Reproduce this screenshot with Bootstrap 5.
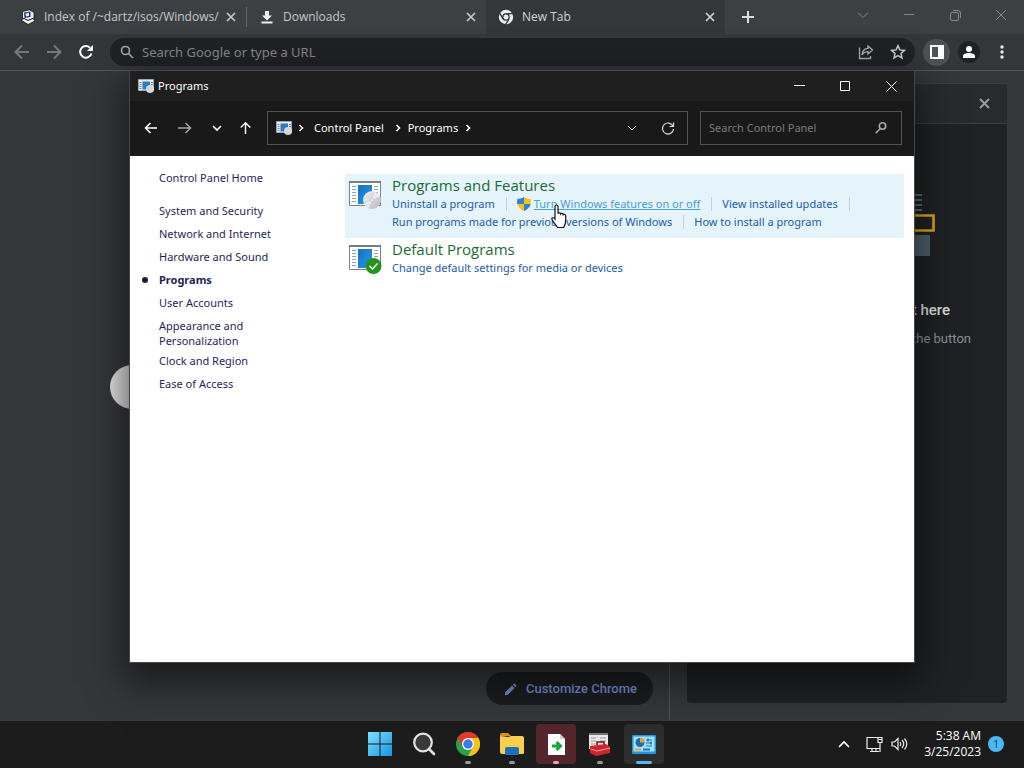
<!DOCTYPE html>
<html lang="en">
<head>
<meta charset="utf-8">
<meta name="viewport" content="width=device-width, initial-scale=1">
<title>Programs</title>
<link href="https://cdn.jsdelivr.net/npm/bootstrap@5.3.0/dist/css/bootstrap.min.css" rel="stylesheet">
<style>
body{font-family:"Open Sans","Noto Sans",sans-serif;font-size:12px;line-height:18px;background:#35363a;color:#fff}
svg{display:block;flex:none}
button{background:none;border:0;padding:0;color:inherit}
a{text-decoration:none}
.tabstrip{height:34px;background:#3c4043;padding-left:8px}
.btab{flex:0 0 239px;padding:0 10px 0 12px;color:#c4c7cb}
.btab.on{background:#35363a;color:#d2d4d7}
.divide{width:1px;height:20px;background:#62666a;margin-right:-10px;margin-left:10px}
.toolbar{height:37px;border-bottom:1px solid #56575a;padding:0 20px 0 13px}
.omni{height:28px;border-radius:14px;background:#202124;padding:0 9px 0 10px;margin-left:13px}
.omni input{background:none;border:0;outline:0;color:#fff;font-family:"Noto Sans",sans-serif;font-size:13px;width:100%;padding:0}
.omni input::placeholder{color:#85878a;opacity:1}
.round26{width:27px;height:27px;border-radius:50%;background:#505155}
.round22{width:22px;height:22px;border-radius:50%;background:#202124}
.ntp{border-right:1px solid #505155;padding-bottom:15px}
.customize{height:33px;border-radius:17px;background:#1b1c1f;color:#7489c8;font:500 13px/20px Roboto,sans-serif;padding:0 16px 0 18px;margin-right:16px}
.sidepane{width:320px;margin:12px 17px 17px;background:#202124;border-radius:0 0 4px 4px;font-family:Roboto,sans-serif}
.sidepane header{height:41px;background:#292a2d;border:1px solid #3c3d40;border-left:0;border-right:0;padding-right:17px}
.scene{margin:68px 72px 0 auto}
.pane-title{font-size:15px;font-weight:500;line-height:20px;color:#dcdee1;padding-right:57px;margin-top:42px}
.pane-sub{font-size:13px;line-height:20px;color:#8d9196;padding-right:36px;margin-top:9px}
.knob{position:absolute;left:110px;top:365px;width:44px;height:44px;border-radius:50%;background:linear-gradient(90deg,#e6e6e6,#bbb)}
.win{position:absolute;left:129px;right:109px;top:70px;bottom:105px;border:1px solid #46474a;background:#fff;box-shadow:0 14px 34px 6px rgba(0,0,0,.5);font-family:"Noto Sans",sans-serif;font-size:11px}
.titlebar{height:30px;background:#1f1f1f;padding-left:8px}
.winbtn{width:46px;height:30px}
.addressrow{height:55px;background:#191919;padding:0 12px 1px 14px}
.addr{height:34px;border:1px solid #535353;padding:0 12px 0 8px}
.find{width:202px;height:34px;border:1px solid #535353;margin-left:12px;padding:0 14px 0 8px}
.find input{background:none;border:0;outline:0;padding:0;width:100%;color:#fff}
.find input::placeholder{color:#7b7b7b;opacity:1}
.sidenav{width:215px;padding:14px 0 0 29px}
.sidenav a{display:block;color:#1f1f5c;line-height:15px;margin-bottom:8px}
.sidenav a.two{margin-bottom:5px}
.sidenav a.home{margin-bottom:18px}
.sidenav a.now{font-weight:700;position:relative}
.sidenav a.now::before{content:"";position:absolute;left:-17px;top:5px;width:6px;height:6px;border-radius:50%;background:#1b1b3c}
.cats{padding-top:18px}
.cat{padding-left:3px;margin-right:10px;height:64px}
.cat.hot{background:#e5f3fb}
.cat>svg{margin-top:6px}
.cat-body{margin-left:10px}
.cat h2{font-family:"Open Sans",sans-serif;font-size:15px;line-height:20px;font-weight:400;margin:1px 0 0;color:#1b6a35}
.cat a{color:#1b5cad}
.cat .task{display:flex;align-items:center}
.task.sep{padding-right:12px;margin-right:10px;background:linear-gradient(#c3d2e0,#c3d2e0) right/1px 14px no-repeat}
.cat a.hover{color:#4c9ed9;text-decoration:underline}
.shield{margin-right:3px}
.pointer{position:absolute;left:551px;top:204px}
.taskbar{height:48px;background:#1c1c1c;border-top:1px solid #3a3a3b;padding:0 20px 1px}
.tb{width:40px;height:40px;border-radius:4px;margin:0 2px;position:relative;display:flex;align-items:center;justify-content:center}
.tb.run::after{content:"";position:absolute;bottom:0;left:17px;width:6px;height:3px;border-radius:2px;background:#9a9a9a}
.tb.alert-red{background:#54262b}
.tb.run.alert-red::after{background:#f0a0a8}
.tb.cur{background:#2d2d2d}
.tb.run.cur::after{left:12px;width:16px;background:#55b8ea}
.tray{flex:1 1 0}
.clock{font-size:12px;line-height:16px;text-align:right}
.note{width:16px;height:16px;border-radius:50%;background:#4cb8f5;color:#163a52;font-size:10px;line-height:16px;text-align:center;margin-left:7px}
</style>
</head>
<body>
<svg width="0" height="0" class="position-absolute">
<defs>
<linearGradient id="blue" x1="0" y1="0" x2="1" y2="1"><stop offset="0" stop-color="#1173c7"/><stop offset="1" stop-color="#2b96e6"/></linearGradient>
<linearGradient id="win11" x1="0" y1="0" x2="1" y2="1"><stop offset="0" stop-color="#7fe0fb"/><stop offset="1" stop-color="#1496e0"/></linearGradient>
<linearGradient id="disc" x1="0" y1="0" x2="1" y2="1"><stop offset="0" stop-color="#f2f3f4"/><stop offset="1" stop-color="#b4b9be"/></linearGradient>
<symbol id="i-x" viewBox="0 0 10 10"><path d="M1 1l8 8M9 1l-8 8" stroke="currentColor" stroke-width="1.7"/></symbol>
<symbol id="i-prog" viewBox="0 0 16 14"><path fill="#e8ebee" stroke="#9aa7b4" d="M.5.5h15v11H.5z"/><path fill="#2a7bc8" d="M4.5 2.500h7.500v8H4.500z"/><path stroke="#6b89a8" d="M1.500 3.500h2M1.500 5.500h2M1.500 7.500h2M1.500 9.500h2M13 3.500h2M13 5.500h2"/><circle cx="12" cy="10" r="4" fill="#d4d6d9"/><path d="M12 10l3-2.600a4 4 0 0 1 .7 3.600z" fill="#f0d9c8"/></symbol>
<symbol id="i-frame" viewBox="0 0 32 26"><path d="M.5.5h31v24H.5z" fill="#fff" stroke="#7b8288"/><path d="M0 0h32v2H0z" fill="#767d83"/><path d="M9 4h14v19H9z" fill="url(#blue)"/><path d="M3 5.500h4M3 8.500h4M3 11.500h4M3 14.500h4M3 17.500h4M3 20.500h4M25 5.500h4M25 8.500h4M25 11.500h4" stroke="#98a2ad"/></symbol>
<symbol id="i-chev" viewBox="0 0 10 10"><path d="M3.500 2L6.500 5 3.500 8" fill="none" stroke="currentColor" stroke-width="1.600"/></symbol>
</defs></svg>

<div class="d-flex flex-column vh-100 overflow-hidden">
 <div class="tabstrip d-flex align-items-stretch">
  <div class="btab d-flex align-items-center">
   <svg width="16" height="16" viewBox="0 0 16 16"><path d="M2.500 2.500L9.500.8l4.500 2.700v5.500L8 11.500 2.500 9z" fill="#eef0f5" stroke="#111" stroke-width=".8"/><path d="M4 3.500L10.500 2.500V8L4.500 9z" fill="#1c2f7a"/><path d="M5.500 4.500l3.500-.7v3.200l-3 .6z" fill="#e8ecff"/><path d="M1 11l3-1.500 4 2 5-2 2 2.500-7 3.500z" fill="#eee" stroke="#111" stroke-width=".8"/></svg>
   <span class="ms-2 flex-grow-1 text-nowrap">Index of /~dartz/isos/Windows/</span>
   <button aria-label="Close tab"><svg width="10" height="10"><use href="#i-x"/></svg></button><span class="divide"></span>
  </div>
  <div class="btab d-flex align-items-center">
   <svg width="16" height="16" viewBox="0 0 16 16"><path d="M6 2h4v4.500h3L8 11.500l-5-5h3z" fill="#eee"/><path d="M2.500 13.500h11" stroke="#eee" stroke-width="2"/></svg>
   <span class="ms-2 flex-grow-1">Downloads</span>
   <button aria-label="Close tab"><svg width="10" height="10"><use href="#i-x"/></svg></button>
  </div>
  <div class="btab on d-flex align-items-center">
   <svg width="16" height="16" viewBox="0 0 16 16"><circle cx="8" cy="8" r="7.200" fill="#e9eaec"/><circle cx="8" cy="8" r="3.200" fill="#e9eaec" stroke="#35363a" stroke-width="1.300"/><path d="M8 4.600h7M5 9.800L1.700 4.200M11 9.800L7.700 15.300" stroke="#35363a" stroke-width="1.300"/></svg>
   <span class="ms-2 flex-grow-1">New Tab</span>
   <button aria-label="Close tab"><svg width="10" height="10"><use href="#i-x"/></svg></button>
  </div>
  <button class="ms-3" aria-label="New tab"><svg width="14" height="14" viewBox="0 0 14 14"><path d="M7 1v12M1 7h12" stroke="#dcdde0" stroke-width="2"/></svg></button>
  <div class="ms-auto d-flex pb-1">
   <button class="winbtn d-flex justify-content-center align-items-center" aria-label="Search tabs"><svg width="12" height="8" viewBox="0 0 12 8" fill="none" stroke="#85898c"><path d="M1 1.500l5 5 5-5"/></svg></button>
   <button class="winbtn d-flex justify-content-center align-items-center" aria-label="Minimize"><svg width="10" height="10" stroke="#85898c"><path d="M0 4.500h10"/></svg></button>
   <button class="winbtn d-flex justify-content-center align-items-center" aria-label="Restore"><svg width="11" height="11" viewBox="0 0 11 11" fill="none" stroke="#85898c"><rect x=".5" y="2.500" width="8" height="8" rx="1.500"/><path d="M3 .5h5A2.500 2.500 0 0 1 10.500 3v5"/></svg></button>
   <button class="winbtn d-flex justify-content-center align-items-center" aria-label="Close"><svg width="12" height="12" stroke="#85898c"><path d="M1 1l10 10M11 1L1 11"/></svg></button>
  </div>
 </div>

 <div class="toolbar d-flex align-items-center">
  <button aria-label="Back"><svg width="18" height="16" viewBox="0 0 18 16" fill="none" stroke="#77787b" stroke-width="2"><path d="M16 8H3M9 1.500L2.500 8 9 14.500"/></svg></button>
  <button class="ms-3" aria-label="Forward"><svg width="15" height="16" viewBox="0 0 15 16" fill="none" stroke="#77787b" stroke-width="2"><path d="M0 8h13M7 1.500L13.500 8 7 14.500"/></svg></button>
  <button class="ms-3" aria-label="Reload"><svg width="16" height="16" viewBox="0 0 16 16"><path d="M13.500 9.500A5.800 5.800 0 1 1 12 3.700" fill="none" stroke="#fff" stroke-width="2"/><path d="M15 1v6H9z" fill="#fff"/></svg></button>
  <div class="omni d-flex align-items-center flex-grow-1 ms-3">
   <svg width="14" height="14" viewBox="0 0 14 14" fill="none" stroke="#a5a7aa" stroke-width="1.600"><circle cx="5.500" cy="5.500" r="4"/><path d="M8.500 8.500L13 13"/></svg>
   <input class="ms-2" type="text" aria-label="Address" placeholder="Search Google or type a URL">
   <button aria-label="Share"><svg width="16" height="16" viewBox="0 0 16 16" fill="none" stroke="#a9abae" stroke-width="1.300"><path d="M1.500 3.500v11h11V12"/><path d="M10 2l4.500 4L10 10V7.700C7 7.700 5.500 8.500 4 11c.3-4 2.500-6.500 6-6.700z"/></svg></button>
   <button class="ms-3" aria-label="Bookmark"><svg width="16" height="16" viewBox="0 0 16 16" fill="none" stroke="#c9cbce" stroke-width="1.500"><path d="M8 1.700l1.900 4.200 4.500.5-3.400 3 1 4.500L8 11.600l-4 2.300 1-4.500-3.400-3 4.500-.5z"/></svg></button>
  </div>
  <button class="round26 ms-2 d-flex align-items-center justify-content-center" aria-label="Side panel"><svg width="14" height="14"><path d="M1 1h12v12H1z" fill="#505155" stroke="#fff" stroke-width="2"/><path d="M8 1h6v12H8z" fill="#fff"/></svg></button>
  <button class="round22 ms-2 d-flex align-items-center justify-content-center" aria-label="Profile"><svg width="12" height="12" viewBox="0 0 12 12" fill="#fff"><circle cx="6" cy="3" r="3"/><path d="M0 12V10c0-2 3-3 6-3s6 1 6 3v2z"/></svg></button>
  <button class="ms-3 ps-1" aria-label="Menu"><svg width="4" height="14" viewBox="0 0 4 14" fill="#e8e8ea"><circle cx="2" cy="2" r="1.700"/><circle cx="2" cy="7" r="1.700"/><circle cx="2" cy="12" r="1.700"/></svg></button>
 </div>

 <div class="d-flex flex-grow-1">
  <main class="ntp flex-grow-1 d-flex align-items-end justify-content-end">
   <button class="customize d-flex align-items-center"><svg class="me-2" width="14" height="14" viewBox="0 0 14 14" fill="#7489c8"><path d="M1 10.500V13h2.500l7-7L8 3.500zM8.800 2.700l2.500 2.500 1.400-1.400L10.200 1.300z"/></svg>Customize Chrome</button>
  </main>
  <aside class="sidepane">
   <header class="d-flex align-items-center justify-content-end"><button aria-label="Close side panel"><svg width="11" height="11"><path d="M1 1l9 9M10 1l-9 9" stroke="#9b9da0" stroke-width="1.800"/></svg></button></header>
   <svg class="scene" width="44" height="66" viewBox="0 0 44 66"><path d="M0 3h31M0 8h31M0 13h31M0 18h31" stroke="#4e6f70" stroke-width="2"/><path d="M0 23.500h42.500v15H0" fill="none" stroke="#d9a915" stroke-width="2.600"/><path d="M0 43h39v21H0z" fill="#4b616c"/></svg>
   <div class="pane-title text-end">t here</div>
   <div class="pane-sub text-end">the button</div>
  </aside>
 </div>

 <footer class="taskbar d-flex align-items-center">
  <div class="tray"></div>
  <nav class="d-flex" aria-label="Taskbar">
   <button class="tb" aria-label="Start"><svg width="24" height="24" viewBox="0 0 24 24" fill="url(#win11)"><path d="M0 0h11.500v11.500H0zM12.500 0H24v11.500H12.500zM0 12.500h11.500V24H0zM12.500 12.500H24V24H12.500z"/></svg></button>
   <button class="tb" aria-label="Search"><svg width="24" height="24" viewBox="0 0 24 24"><circle cx="11" cy="10.500" r="8.800" fill="#3a3a3a" stroke="#e3e3e3" stroke-width="2.200"/><path d="M17 17l5 5" stroke="#e3e3e3" stroke-width="2.600" stroke-linecap="round"/></svg></button>
   <button class="tb run" aria-label="Chrome"><svg width="24" height="24" viewBox="0 0 24 24"><circle cx="12" cy="12" r="12" fill="#2aa14b"/><path d="M1.600 6A12 12 0 0 1 22.400 6H12L6.800 15z" fill="#e23b2e"/><path d="M22.400 6A12 12 0 0 1 12 24l5.200-9L12 6z" fill="#fbc116"/><circle cx="12" cy="12" r="6" fill="#fff"/><circle cx="12" cy="12" r="4.700" fill="#3a7bf0"/></svg></button>
   <button class="tb run" aria-label="File Explorer"><svg width="24" height="22" viewBox="0 0 24 22"><path d="M0 2q0-2 2-2h6l3 3H0z" fill="#d9940d"/><path d="M0 6V4q0-1 1-1l7 1 3-1h11q2 0 2 2v15q0 1-2 1H2q-2 0-2-2z" fill="#fbcf4b"/><path d="M5 22v-6q0-2 2-2h10q2 0 2 2v6z" fill="#1b6fbf"/></svg></button>
   <button class="tb run alert-red" aria-label="Installer"><svg width="17" height="21" viewBox="0 0 17 21"><path d="M0 0h12l5 5v16H0z" fill="#fff"/><path d="M12 0v5h5" fill="#ccd0d2"/><path d="M4 12h7M8.500 8l4 4-4 4" fill="none" stroke="#17a53a" stroke-width="3"/></svg></button>
   <button class="tb run" aria-label="Toolbox"><svg width="22" height="23" viewBox="0 0 22 23"><path d="M0 0h19v16H0z" fill="#e8e8e8"/><path d="M0 0h19v2H0z" fill="#777"/><path d="M2 5h5M2 8h5M2 11h5M11 5h6M11 8h6" stroke="#9b9b9b"/><path d="M8 12V9h7v3" fill="none" stroke="#7a1117" stroke-width="1.500"/><path d="M1 13l16-2 4 3v6l-14 3-6-3z" fill="#d0232c"/><path d="M2 16l6 2 13-3" stroke="#f5a0a0" fill="none"/></svg></button>
   <button class="tb run cur" aria-label="Control Panel"><svg width="24" height="19" viewBox="0 0 24 19"><rect width="24" height="19" rx="1" fill="#2395dd"/><path d="M1.500 1.500h21v15h-21z" fill="#a6e1fa"/><circle cx="8" cy="7.500" r="4.500" fill="#176db7"/><path d="M8 7.500V3a4.500 4.500 0 0 1 4.500 4.500z" fill="#f3a321"/><path d="M14 5h6M14 8h6M14 11h6" stroke="#1a72b7"/><path d="M16 3.500v3M19 6.500v3" stroke="#1a72b7" stroke-width="1.500"/><path d="M3 14.500h6" stroke="#f3a321" stroke-width="2"/><path d="M11 14.500h7" stroke="#1a72b7" stroke-width="2"/></svg></button>
  </nav>
  <div class="tray d-flex align-items-center justify-content-end">
   <button aria-label="Hidden icons"><svg width="12" height="8" viewBox="0 0 12 8"><path d="M1 7l5-5 5 5" fill="none" stroke="#fff" stroke-width="1.600"/></svg></button>
   <svg class="ms-3" width="17" height="17" viewBox="0 0 17 17" fill="none" stroke="#eee" stroke-width="1.200"><path d="M12 1.500H1v11h12.500M4 15.500h9M6 12.500v3M10 12.500v3M14 6.500v9.500M12 1.500h4v5h-4zM12 3.500h4"/></svg>
   <svg class="ms-2" width="17" height="14" viewBox="0 0 17 14" fill="none" stroke="#eee" stroke-width="1.200"><path d="M1 5h2.500L7 1.500v11L3.500 9H1zM9 5q1.500 2 0 4M11 3q3.500 4 0 8M13.500 1.500q4.500 5.500 0 11"/></svg>
   <div class="clock ms-3">5:38 AM<br>3/25/2023</div>
   <span class="note">1</span>
  </div>
 </footer>
</div>

<div class="knob"></div>

<section class="win d-flex flex-column" aria-label="Programs">
 <div class="titlebar d-flex align-items-center">
  <svg width="16" height="14"><use href="#i-prog"/></svg><span class="ms-1 flex-grow-1">Programs</span>
  <button class="winbtn d-flex justify-content-center align-items-center" aria-label="Minimize"><svg width="11" height="10" stroke="#fff"><path d="M0 4.500h11"/></svg></button>
  <button class="winbtn d-flex justify-content-center align-items-center" aria-label="Maximize"><svg width="10" height="10" fill="none" stroke="#fff"><path d="M.5.5h9v9h-9z"/></svg></button>
  <button class="winbtn d-flex justify-content-center align-items-center" aria-label="Close"><svg width="11" height="11" stroke="#fff"><path d="M.5.5l10 10M10.500.5l-10 10"/></svg></button>
 </div>
 <div class="addressrow d-flex align-items-center">
  <button aria-label="Back"><svg width="14" height="12" viewBox="0 0 14 12" fill="none" stroke="#fff" stroke-width="1.500"><path d="M13 6H1.500M6.500 1l-5 5 5 5"/></svg></button>
  <button class="ms-3 ps-1" aria-label="Forward"><svg width="14" height="12" viewBox="0 0 14 12" fill="none" stroke="#a5a5a5" stroke-width="1.500"><path d="M0 6h12.500M7.500 1l5 5-5 5"/></svg></button>
  <button class="ms-3 ps-1" aria-label="Recent"><svg width="10" height="7" viewBox="0 0 10 7" fill="none" stroke="#fff" stroke-width="1.600"><path d="M1 1l4 4 4-4"/></svg></button>
  <button class="ms-3" aria-label="Up"><svg width="13" height="12" viewBox="0 0 13 12" fill="none" stroke="#fff" stroke-width="1.400"><path d="M7.500 12V1M2.700 5.500l4.800-4.700 4.800 4.700"/></svg></button>
  <div class="addr d-flex align-items-center flex-grow-1 ms-3">
   <svg width="16" height="14"><use href="#i-prog"/></svg>
   <svg class="ms-1" width="10" height="10"><use href="#i-chev"/></svg>
   <a href="#" class="ms-2 text-white">Control Panel</a>
   <svg class="ms-2 me-1" width="12" height="10"><use href="#i-chev"/></svg>
   <a href="#" class="text-white">Programs</a>
   <svg class="ms-1" width="12" height="10"><use href="#i-chev"/></svg>
   <button class="ms-auto" aria-label="History"><svg width="10" height="7" viewBox="0 0 10 7" fill="none" stroke="#ddd"><path d="M1 1l4 4 4-4"/></svg></button>
   <button class="ms-4" aria-label="Refresh"><svg width="14" height="14" viewBox="0 0 14 14" fill="none" stroke="#ddd" stroke-width="1.200"><path d="M12 5.200A5.500 5.500 0 1 0 12.500 8M12.500 1.500v4h-4"/></svg></button>
  </div>
  <div class="find d-flex align-items-center">
   <input type="text" aria-label="Search Control Panel" placeholder="Search Control Panel">
   <svg width="12" height="12" viewBox="0 0 12 12" fill="none" stroke="#a9a9a9" stroke-width="1.600"><circle cx="7.500" cy="4" r="3.200"/><path d="M5.200 6.500L.7 11.200"/></svg>
  </div>
 </div>
 <div class="d-flex flex-grow-1">
  <nav class="sidenav" aria-label="Control Panel">
   <a href="#" class="home">Control Panel Home</a>
   <a href="#">System and Security</a>
   <a href="#">Network and Internet</a>
   <a href="#">Hardware and Sound</a>
   <a href="#" class="now">Programs</a>
   <a href="#">User Accounts</a>
   <a href="#" class="two">Appearance and<br>Personalization</a>
   <a href="#">Clock and Region</a>
   <a href="#">Ease of Access</a>
  </nav>
  <div class="cats flex-grow-1">
   <div class="cat hot d-flex">
    <svg width="34" height="32" viewBox="0 0 34 32"><use href="#i-frame" x="1" y="1" width="32" height="26"/><circle cx="24" cy="20" r="9" fill="url(#disc)"/><path d="M24 20l3-8a9 9 0 0 1 5 4zM24 20l-3 8a9 9 0 0 1-5-4z" fill="#fff" opacity=".5"/><circle cx="24" cy="20" r="1.500" fill="#fff" stroke="#c5c9cc"/></svg>
    <div class="cat-body">
     <h2>Programs and Features</h2>
     <div class="d-flex text-nowrap">
      <span class="task sep"><a href="#">Uninstall a program</a></span>
      <span class="task sep"><svg class="shield" width="14" height="14" viewBox="0 0 14 14"><path d="M7 0v7H.3C0 5 .2 3 .5 1.800 3 2 5 1.300 7 0z" fill="#2d7fd3"/><path d="M7 0v7h6.700c.3-2 .1-4-.2-5.200C11 2 9 1.300 7 0zM7 7v7C3.500 12.500 1 10 .3 7z" fill="#f9c21b"/><path d="M7 7v7c3.500-1.500 6-4 6.700-7z" fill="#2d7fd3"/></svg><a href="#" class="hover">Turn Windows features on or off</a></span>
      <span class="task sep"><a href="#">View installed updates</a></span>
     </div>
     <div class="d-flex text-nowrap">
      <span class="task sep"><a href="#">Run programs made for previous versions of Windows</a></span>
      <span class="task"><a href="#">How to install a program</a></span>
     </div>
    </div>
   </div>
   <div class="cat d-flex">
    <svg width="34" height="32" viewBox="0 0 34 32"><use href="#i-frame" x="1" y="1" width="32" height="26"/><circle cx="25.500" cy="22" r="8" fill="#25941f"/><path d="M21.500 22l3 3 5-5.500" fill="none" stroke="#fff" stroke-width="1.300"/></svg>
    <div class="cat-body">
     <h2>Default Programs</h2>
     <a href="#">Change default settings for media or devices</a>
    </div>
   </div>
  </div>
 </div>
</section>

<svg class="pointer" width="16" height="25" viewBox="0 0 16 25"><path d="M4 2.500C4 .5 7 .5 7 2.500V9.500c.5-1 2.500-.8 2.700.5.600-1 2.300-.7 2.500.7.800-.7 2.500-.4 2.500 1.300v5c0 3-1.200 4.500-2 6.500H6.500C5 21 2.500 18.500 1 15.500c-.8-1.800 1.200-2.600 3-.5z" fill="#fff" stroke="#111" stroke-width="1.200"/></svg>

<script src="https://cdn.jsdelivr.net/npm/bootstrap@5.3.0/dist/js/bootstrap.bundle.min.js"></script>
</body>
</html>
